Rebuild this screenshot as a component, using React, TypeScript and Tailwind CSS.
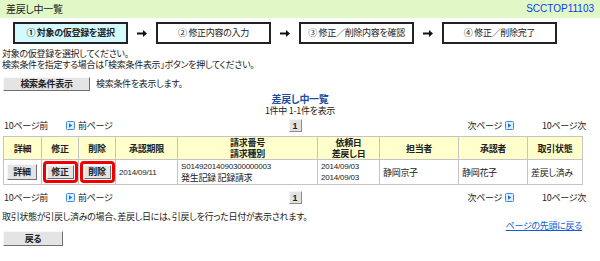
import React from "react";

const jp = "font-['Noto_Sans_CJK_JP','Noto_Sans',sans-serif] [font-feature-settings:'palt'] tracking-[-0.3px]";
const num = "font-['Liberation_Sans',sans-serif] tracking-[-0.2px]";

function Arrow() {
  return (
    <svg width="10" height="7" viewBox="0 0 10 7" className="block">
      <path d="M0 2.5h6V0l4 3.5L6 7V4.5H0z" fill="#111" />
    </svg>
  );
}

function PageIcon() {
  return (
    <svg width="9" height="9" viewBox="0 0 9 9" className="block">
      <rect x="0.5" y="0.5" width="8" height="8" rx="1" fill="#dceeff" stroke="#3b8de0" />
      <path d="M3 2.2 6.2 4.5 3 6.8z" fill="#1a6fd0" />
    </svg>
  );
}

function GrayButton({ children, className = "" }: { children: React.ReactNode; className?: string }) {
  return (
    <div
      className={
        "flex items-center justify-center whitespace-nowrap bg-[#e4e4e4] border border-t-[#f8f8f8] border-l-[#f8f8f8] border-b-[#707070] border-r-[#707070] font-bold text-[#222] " +
        className
      }
    >
      {children}
    </div>
  );
}

function Step({ label, active }: { label: string; active?: boolean }) {
  return (
    <div
      className={
        "flex h-[22px] w-[115px] items-center justify-center whitespace-nowrap border-2 border-[#222] " +
        (active ? "bg-[#d4fbff] font-bold" : "bg-white")
      }
    >
      {label}
    </div>
  );
}

function Pager() {
  return (
    <div className="flex h-[13px] w-[582px] items-center whitespace-nowrap text-[#222]">
      <div className="w-[66px] pl-[4px]">10ページ前</div>
      <div className="flex items-center gap-[3px]">
        <PageIcon />
        <span>前ページ</span>
      </div>
      <div className="flex flex-1 justify-center pl-[10px]">
        <div className={"flex h-[13px] w-[13px] items-center justify-center border border-t-[#f4f4f4] border-l-[#f4f4f4] border-b-[#8a8a8a] border-r-[#8a8a8a] bg-[#e2e2e2] text-[9px] font-bold " + num}>
          1
        </div>
      </div>
      <div className="flex items-center gap-[3px] pr-[28px]">
        <span>次ページ</span>
        <PageIcon />
      </div>
      <div className="w-[40px] text-right">10ページ次</div>
    </div>
  );
}

const cols = [38, 37, 37, 62, 140, 62, 79, 69, 55];

export default function App() {
  const th = "border border-[#c4c4c4] bg-[#ffffcc] font-bold text-center leading-[11px] p-0";
  const td = "border border-[#c4c4c4] leading-[11px] px-[3px] py-0 whitespace-nowrap";
  return (
    <div className={"h-[261px] w-[600px] overflow-hidden bg-white text-[9px] leading-[10px] text-[#222] " + jp}>
      <div className="flex h-[18px] items-center justify-between bg-[#e0f7c6] px-[6px]">
        <span className="text-[10px]">差戻し中一覧</span>
        <span className="font-['Liberation_Sans',sans-serif] text-[10px] tracking-normal text-[#0a3cf0]">SCCTOP11103</span>
      </div>

      <div className="mt-[4px] flex items-center pl-[13px]">
        <Step label="① 対象の仮登録を選択" active />
        <div className="flex w-[28px] justify-center"><Arrow /></div>
        <Step label="② 修正内容の入力" />
        <div className="flex w-[28px] justify-center"><Arrow /></div>
        <Step label="③ 修正／削除内容を確認" />
        <div className="flex w-[28px] justify-center"><Arrow /></div>
        <Step label="④ 修正／削除完了" />
      </div>

      <div className="mt-[4px] pl-[2px] leading-[11px]">
        <div>対象の仮登録を選択してください。</div>
        <div>検索条件を指定する場合は「検索条件表示」ボタンを押してください。</div>
      </div>

      <div className="mt-[7px] flex items-center pl-[3px]">
        <GrayButton className="h-[14px] w-[87px]">検索条件表示</GrayButton>
        <span className="ml-[6px]">検索条件を表示します。</span>
      </div>

      <div className="mt-[2px] text-center text-[10px] font-bold leading-[12px] text-[#1c4ea0]">差戻し中一覧</div>
      <div className="mt-[1px] text-center">1件中 1-1件を表示</div>

      <div className="mt-[3px]">
        <Pager />
      </div>

      <table className="ml-[3px] mt-[4px] border-collapse">
        <colgroup>
          {cols.map((w, i) => (
            <col key={i} style={{ width: w }} />
          ))}
        </colgroup>
        <thead>
          <tr className="h-[23px]">
            <th className={th}>詳細</th>
            <th className={th}>修正</th>
            <th className={th}>削除</th>
            <th className={th}>承認期限</th>
            <th className={th}>請求番号<br />請求種別</th>
            <th className={th}>依頼日<br />差戻し日</th>
            <th className={th}>担当者</th>
            <th className={th}>承認者</th>
            <th className={th}>取引状態</th>
          </tr>
        </thead>
        <tbody>
          <tr className="h-[25px]">
            <td className="border border-[#c4c4c4] px-[3px] py-0">
              <GrayButton className="h-[16px] w-[30px]">詳細</GrayButton>
            </td>
            <td className="border border-[#c4c4c4] p-0">
              <div className="mx-auto flex h-[22px] w-[35px] items-center justify-center rounded-[4px] border-[3px] border-[#ee0000]">
                <GrayButton className="h-[14px] w-[27px]">修正</GrayButton>
              </div>
            </td>
            <td className="border border-[#c4c4c4] p-0">
              <div className="mx-auto flex h-[22px] w-[35px] items-center justify-center rounded-[4px] border-[3px] border-[#ee0000]">
                <GrayButton className="h-[14px] w-[27px]">削除</GrayButton>
              </div>
            </td>
            <td className={td + " text-[8px] " + num}>2014/09/11</td>
            <td className={td}>
              <div className={"text-[8px] " + num}>S01492014090300000003</div>
              <div>発生記録 記録請求</div>
            </td>
            <td className={td + " text-[8px] " + num}>
              <div>2014/09/03</div>
              <div>2014/09/03</div>
            </td>
            <td className={td}>静岡京子</td>
            <td className={td}>静岡花子</td>
            <td className={td}>差戻し済み</td>
          </tr>
        </tbody>
      </table>

      <div className="mt-[6px]">
        <Pager />
      </div>

      <div className="mt-[8px] pl-[2px]">取引状態が引戻し済みの場合、差戻し日には、引戻しを行った日付が表示されます。</div>

      <div className="mt-[-1px] flex w-[582px] justify-end">
        <a className="text-[#1060d0] underline">ページの先頭に戻る</a>
      </div>

      <div className="mt-0 pl-[3px]">
        <GrayButton className="h-[15px] w-[60px]">戻る</GrayButton>
      </div>
    </div>
  );
}
